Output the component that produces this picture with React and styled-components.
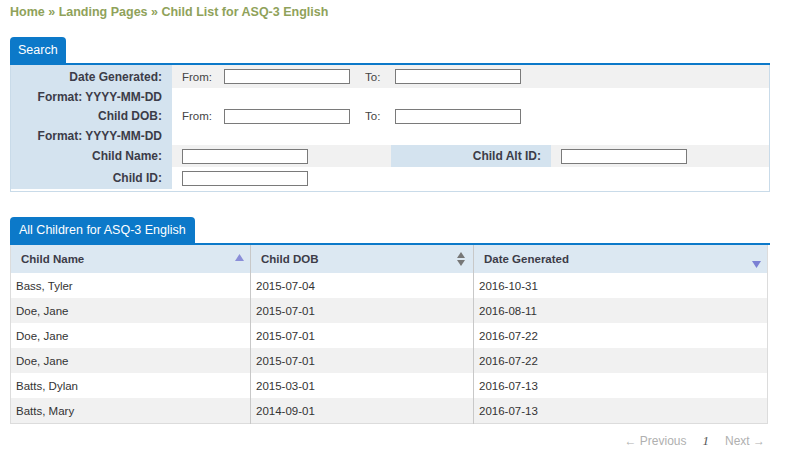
import React from "react";
import styled, { createGlobalStyle } from "styled-components";

const GlobalStyle = createGlobalStyle`
  body {
    margin: 0;
    background: #ffffff;
    font-family: "Liberation Sans", Arial, sans-serif;
    color: #333;
  }
`;

const children = [
  { name: "Bass, Tyler", dob: "2015-07-04", generated: "2016-10-31" },
  { name: "Doe, Jane", dob: "2015-07-01", generated: "2016-08-11" },
  { name: "Doe, Jane", dob: "2015-07-01", generated: "2016-07-22" },
  { name: "Doe, Jane", dob: "2015-07-01", generated: "2016-07-22" },
  { name: "Batts, Dylan", dob: "2015-03-01", generated: "2016-07-13" },
  { name: "Batts, Mary", dob: "2014-09-01", generated: "2016-07-13" },
];

const SortIcon = ({ dir }) => {
  if (dir === "up")
    return (
      <svg width="9" height="7" viewBox="0 0 9 7">
        <path d="M4.5 0 L9 7 L0 7 Z" fill="#8a8ed8" />
      </svg>
    );
  if (dir === "down")
    return (
      <svg width="9" height="7" viewBox="0 0 9 7">
        <path d="M0 0 L9 0 L4.5 7 Z" fill="#7b80d4" />
      </svg>
    );
  return (
    <svg width="8" height="14" viewBox="0 0 8 14">
      <path d="M4 0 L8 6 L0 6 Z" fill="#777" />
      <path d="M0 8 L8 8 L4 14 Z" fill="#777" />
    </svg>
  );
};

const App = () => {
  return (
    <>
      <GlobalStyle />
      <Page>
        <Breadcrumb>Home » Landing Pages » Child List for ASQ-3 English</Breadcrumb>

        <Section>
          <TabBar>
            <Tab>Search</Tab>
          </TabBar>
          <SearchPanel>
            <FormRow $h={23}>
              <Label>Date Generated:</Label>
              <Field $shade>
                <FieldText>From:</FieldText>
                <Input type="text" $gap={12} />
                <FieldText $left={15}>To:</FieldText>
                <Input type="text" $gap={15} />
              </Field>
            </FormRow>
            <FormRow $h={18}>
              <Label>Format: YYYY-MM-DD</Label>
              <Field />
            </FormRow>
            <FormRow $h={20}>
              <Label>Child DOB:</Label>
              <Field>
                <FieldText>From:</FieldText>
                <Input type="text" $gap={12} />
                <FieldText $left={15}>To:</FieldText>
                <Input type="text" $gap={15} />
              </Field>
            </FormRow>
            <FormRow $h={19}>
              <Label>Format: YYYY-MM-DD</Label>
              <Field />
            </FormRow>
            <FormRow $h={22}>
              <Label>Child Name:</Label>
              <Field $shade $width={219}>
                <Input type="text" />
              </Field>
              <Label $width={160}>Child Alt ID:</Label>
              <Field $shade>
                <Input type="text" />
              </Field>
            </FormRow>
            <FormRow $h={22}>
              <Label>Child ID:</Label>
              <Field>
                <Input type="text" />
              </Field>
            </FormRow>
          </SearchPanel>
        </Section>

        <Section $top={25}>
          <TabBar>
            <Tab $wide>All Children for ASQ-3 English</Tab>
          </TabBar>
          <Table>
            <thead>
              <tr>
                <HeadCell $width={239}>
                  <HeadInner>
                    Child Name
                    <IconSlot>
                      <SortIcon dir="up" />
                    </IconSlot>
                  </HeadInner>
                </HeadCell>
                <HeadCell $width={222}>
                  <HeadInner $pr={8}>
                    Child DOB
                    <IconSlot $mid>
                      <SortIcon />
                    </IconSlot>
                  </HeadInner>
                </HeadCell>
                <HeadCell>
                  <HeadInner>
                    Date Generated
                    <IconSlot $low>
                      <SortIcon dir="down" />
                    </IconSlot>
                  </HeadInner>
                </HeadCell>
              </tr>
            </thead>
            <tbody>
              {children.map((c, i) => (
                <Row key={i} $odd={i % 2 === 1}>
                  <Cell>{c.name}</Cell>
                  <Cell>{c.dob}</Cell>
                  <Cell>{c.generated}</Cell>
                </Row>
              ))}
            </tbody>
          </Table>
          <Pager>
            <PagerLink>← Previous</PagerLink>
            <PageNum>1</PageNum>
            <PagerLink>Next →</PagerLink>
          </Pager>
        </Section>
      </Page>
    </>
  );
};

const Page = styled.div`
  width: 760px;
  padding: 4px 10px 0;
`;

const Breadcrumb = styled.div`
  font-size: 12.5px;
  font-weight: bold;
  color: #8fa25a;
  line-height: 16px;
`;

const Section = styled.div`
  margin-top: ${(p) => p.$top || 17}px;
`;

const TabBar = styled.div`
  display: flex;
  border-bottom: 2px solid #0c79c9;
`;

const Tab = styled.div`
  background: #0c79c9;
  color: #fff;
  font-size: 12.5px;
  line-height: 26px;
  height: 26px;
  padding: 0 ${(p) => (p.$wide ? 9 : 8)}px;
  border-radius: 4px 4px 0 0;
`;

const SearchPanel = styled.div`
  border: 1px solid #c9dbe9;
  border-top: none;
  padding-bottom: 2px;
`;

const FormRow = styled.div`
  display: flex;
  height: ${(p) => p.$h}px;
`;

const Label = styled.div`
  width: ${(p) => p.$width || 161}px;
  flex: none;
  background: #d4e3ef;
  font-size: 12px;
  font-weight: bold;
  color: #3c3c48;
  text-align: right;
  padding-right: 10px;
  box-sizing: border-box;
  display: flex;
  align-items: center;
  justify-content: flex-end;
`;

const Field = styled.div`
  display: flex;
  align-items: center;
  padding-left: 10px;
  box-sizing: border-box;
  background: ${(p) => (p.$shade ? "#f1f1f1" : "#fff")};
  ${(p) => (p.$width ? `width: ${p.$width}px; flex: none;` : "flex: 1;")}
`;

const FieldText = styled.span`
  font-size: 11.5px;
  color: #444;
  margin-left: ${(p) => p.$left || 0}px;
`;

const Input = styled.input`
  width: 126px;
  height: 15px;
  box-sizing: border-box;
  border: 1px solid #7a7a7a;
  padding: 0;
  margin: 0 0 0 ${(p) => p.$gap || 0}px;
  background: #fff;
`;

const Table = styled.table`
  width: 758px;
  border-collapse: collapse;
  font-size: 11.5px;
  border-left: 1px solid #dcdcdc;
  border-right: 1px solid #dcdcdc;
  border-bottom: 1px solid #dcdcdc;
`;

const HeadCell = styled.th`
  ${(p) => (p.$width ? `width: ${p.$width}px;` : "")}
  height: 28px;
  padding: 0;
  background: #dce8f2;
  text-align: left;
  font-weight: bold;
  color: #3c3c48;
  border-left: 1px solid #c8c8c8;
  &:first-child {
    border-left: none;
  }
`;

const HeadInner = styled.div`
  display: flex;
  align-items: center;
  justify-content: space-between;
  padding: 0 ${(p) => p.$pr || 6}px 0 10px;
  height: 28px;
`;

const IconSlot = styled.span`
  display: flex;
  align-items: center;
  margin-top: ${(p) => (p.$low ? 10 : p.$mid ? 0 : -3)}px;
`;

const Row = styled.tr`
  background: ${(p) => (p.$odd ? "#f1f1f1" : "#fff")};
`;

const Cell = styled.td`
  height: 25px;
  box-sizing: border-box;
  padding: 1px 0 0 5px;
  color: #333;
  border-left: 1px solid #c8c8c8;
  &:first-child {
    border-left: none;
  }
`;

const Pager = styled.div`
  display: flex;
  justify-content: flex-end;
  align-items: center;
  gap: 16px;
  margin-top: 9px;
  padding-right: 5px;
  font-size: 12px;
`;

const PagerLink = styled.span`
  color: #b0b0b0;
`;

const PageNum = styled.span`
  font-family: "Liberation Serif", serif;
  font-style: italic;
  color: #555;
  font-size: 13px;
`;

export default App;
